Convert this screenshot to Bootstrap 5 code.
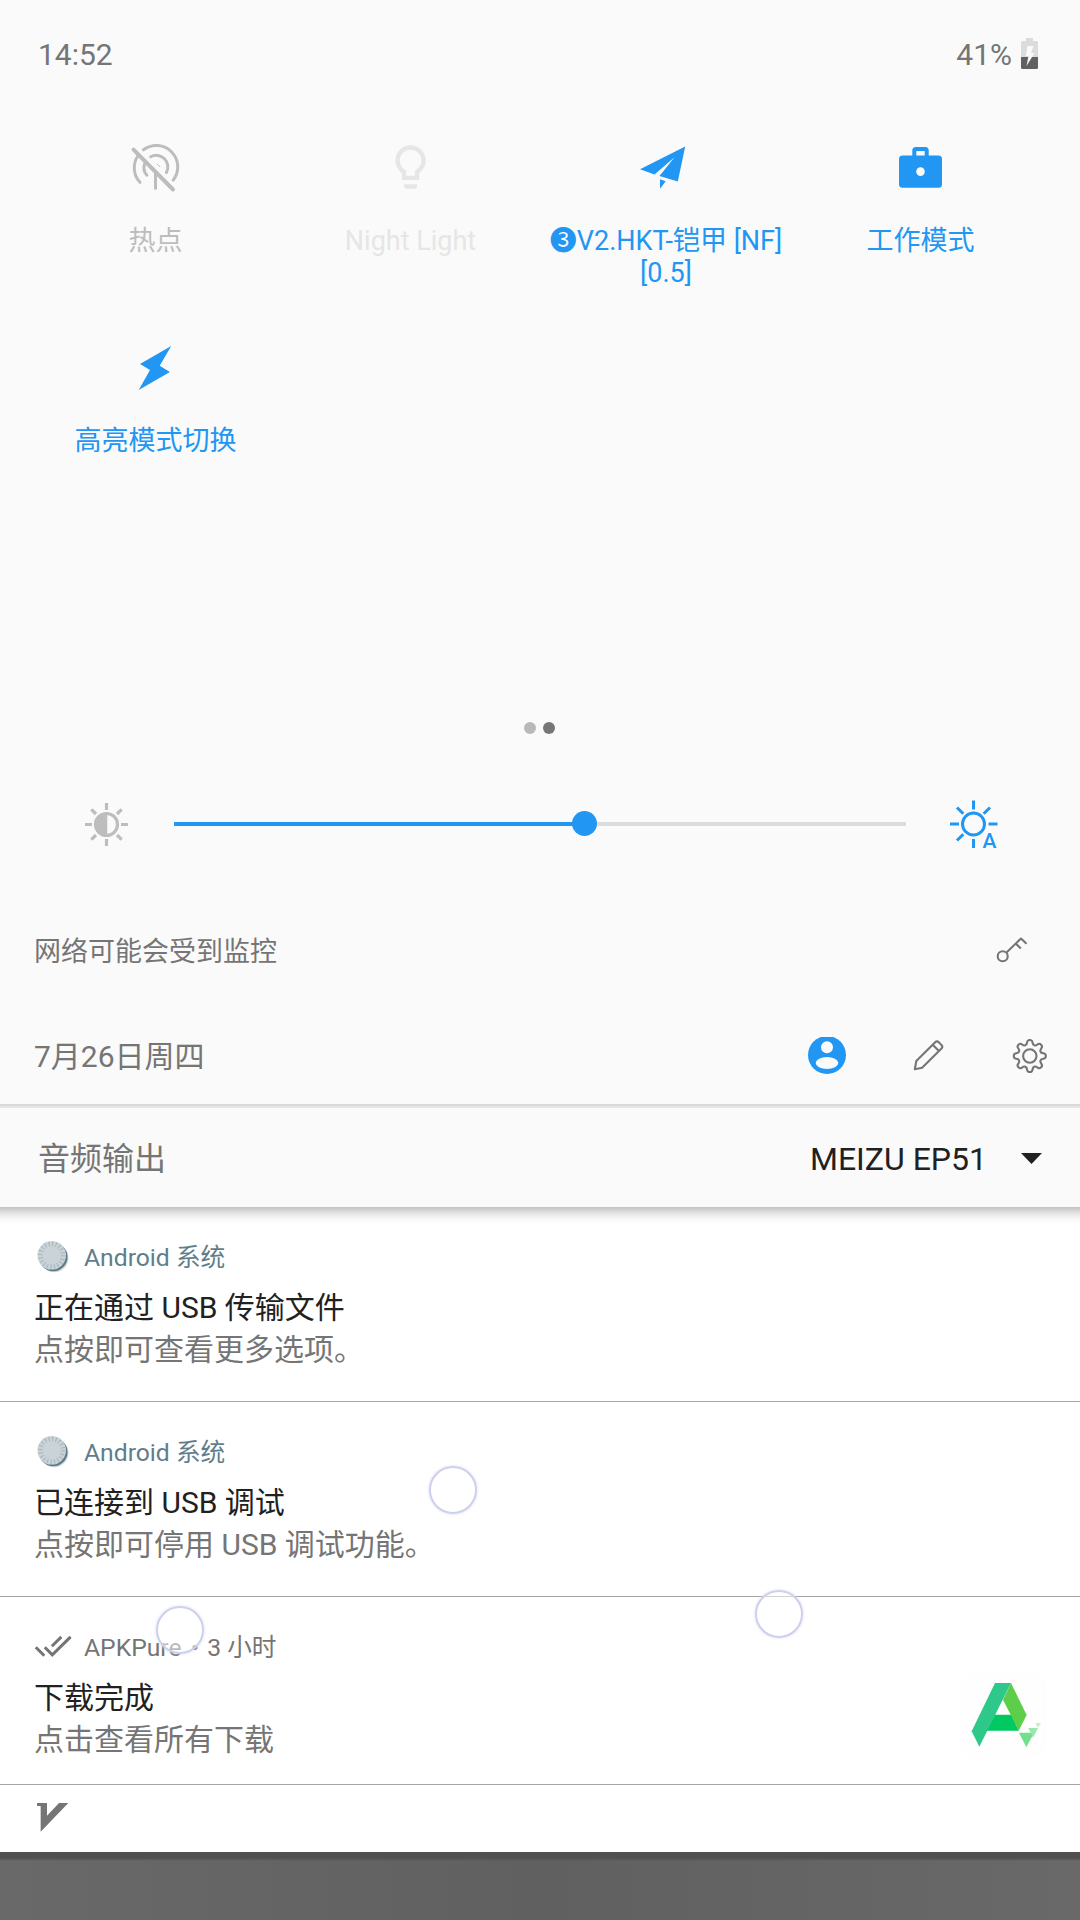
<!DOCTYPE html>
<html lang="zh-CN">
<head>
<meta charset="utf-8">
<meta name="viewport" content="width=device-width, initial-scale=1">
<title>快捷设置</title>
<link rel="stylesheet" href="https://cdn.jsdelivr.net/npm/bootstrap@5.3.0/dist/css/bootstrap.min.css">
<style>
  body { font-family: Roboto, "Noto Sans CJK SC", sans-serif; background: #646464; color: #757575; width: 1080px; height: 1920px; overflow: hidden; }
  svg { display: block; flex: none; }
  .panel { background: #fafafa; }
  .statusbar { height: 110px; padding: 0 42px 0 38px; font-size: 30px; line-height: 40px; }
  .statusbar svg { margin: 0 0 3px 9px; }
  .tiles { height: 590px; padding: 0 32px 0 28px; align-content: flex-start; }
  .tile { height: 200px; padding-top: 31px; font-size: 27px; line-height: 32px; color: #2196f3; }
  .tile svg { margin-bottom: 32px; }
  .tile-off { color: #bdbdbd; }
  .tile-disabled { color: #e6e6e6; }
  .tile-shift { padding-left: 1px; white-space: nowrap; }
  .pager { height: 56px; gap: 7px; padding-right: 1px; }
  .pager span { width: 12px; height: 12px; background: #b9b9b9; }
  .pager .current { background: #767676; }
  .brightness { height: 136px; padding: 0 82px 0 84px; }
  .track { width: 732px; height: 4px; margin: 0 43px 0 45px; background: #dcdcdc; }
  .track-fill { height: 4px; background: #2196f3; }
  .thumb { width: 25px; height: 25px; margin: 0 -12px 1px 0; background: #2196f3; flex: none; }
  .monitor { height: 118px; padding: 0 52px 0 34px; font-size: 27px; }
  .monitor span { padding-top: 2px; }
  .dateline { height: 94px; padding: 0 32px 0 34px; font-size: 30px; }
  .dateline span { padding-bottom: 2px; }
  .rule { height: 4px; background: linear-gradient(#d9d9d9 50%, #e6e6e6 50%); }
  .audio { height: 99px; padding: 2px 38px 0 38px; font-size: 32px; line-height: 40px; }
  .audio-device { color: #212121; }
  .audio svg { margin: 0 0 1px 34px; }
  .shade { background: #fff; }
  .notice { height: 195px; padding: 36px 34px 0 34px; border-bottom: 1px solid #a6a6a6; background: #fff; }
  .notice:first-child { background: linear-gradient(#c2c2c2, #e2e2e2 6px, #f7f7f7 12px, #fff 17px); }
  .notice-head { height: 30px; margin-bottom: 14px; font-size: 24.7px; line-height: 30px; }
  .notice-head svg { margin: 0 10px 2px 0; }
  .dot { margin: 0 2px 0 3px; }
  .from-system { color: #607d8b; }
  .notice-title, .notice-body { font-size: 30px; line-height: 42px; }
  .notice-title { color: #212121; }
  .notice-short { height: 188px; }
  .overflow-row { height: 67px; padding: 15px 36px; }
  .behind { height: 68px; background: linear-gradient(#505050 0, #505050 6px, transparent 9px), linear-gradient(90deg, #696969, #606060 50%, #696969); }
  .touch { position: absolute; width: 48px; height: 48px; border: 2px solid #cdd0ec; border-radius: 50%; background: rgba(255,255,255,.5); box-shadow: 0 0 3px #d5d8f3; }
</style>
</head>
<body class="position-relative">
<main>
  <section class="panel">
    <header class="statusbar d-flex align-items-center justify-content-between">
      <span>14:52</span>
      <div class="d-flex align-items-center">
        <span>41%</span>
        <svg width="17" height="31" viewBox="0 0 17 31"><path fill="#dcdcdc" d="M5 0h7v3h3.500q1.500 0 1.500 1.500V20H0V4.500Q0 3 1.500 3H5z"/><path fill="#616161" d="M0 19h17v10.500q0 1.500-1.500 1.500h-14Q0 31 0 29.500z"/><path fill="#fafafa" d="M6.500 8h6l-2.500 7h3.500L5.500 28l2-10H4.700z"/></svg>
      </div>
    </header>

    <div class="tiles d-flex flex-wrap">
      <div class="tile tile-off w-25 d-flex flex-column align-items-center text-center">
        <svg width="52" height="52" viewBox="130 140.500 52 52" fill="none" stroke="currentColor" stroke-width="3" stroke-linecap="round"><path d="M143.500 149.300a21.400 21.400 0 0 1 29.700 30.300M137.800 155.500a21.400 21.400 0 0 0 2.200 26.300M150.700 156.200a11.600 11.600 0 0 1 15.700 15.800M145 162.300a11.600 11.600 0 0 0 1.900 12.400"/><path stroke-linecap="butt" d="M155.500 172v17"/><path stroke-width="4" d="M133.500 149.200L173 189"/><path stroke-linecap="butt" stroke-width="1" d="M156.800 163.200l3.400 3.400"/></svg>
        <span>热点</span>
      </div>
      <div class="tile tile-disabled w-25 d-flex flex-column align-items-center text-center">
        <svg width="52" height="52" viewBox="0.200 0 24 24" fill="currentColor"><path d="M9 21c0 .55.45 1 1 1h4c.55 0 1-.45 1-1v-1H9v1zm3-19C8.140 2 5 5.140 5 9c0 2.380 1.190 4.470 3 5.740V18h8v-3.260c1.810-1.270 3-3.360 3-5.740 0-3.860-3.140-7-7-7zm2.850 11.100l-.85.6V16h-4v-2.300l-.85-.6C7.800 12.160 7 10.630 7 9c0-2.760 2.240-5 5-5s5 2.240 5 5c0 1.630-.8 3.160-2.150 4.100z"/></svg>
        <span>Night Light</span>
      </div>
      <div class="tile w-25 d-flex flex-column align-items-center text-center">
        <svg width="52" height="52" viewBox="640 141 52 52" fill="currentColor"><path d="M685.200 146.500L640 169.300l14.500 5.200 20-17.300-15 18.800 18.300 5.500zM660 179.300l5.700 2-5.700 7.500z"/></svg>
        <span class="tile-shift">❸V2.HKT-铠甲 [NF]<br>[0.5]</span>
      </div>
      <div class="tile w-25 d-flex flex-column align-items-center text-center">
        <svg width="52" height="52" viewBox="895 141 52 52"><rect x="899" y="155.500" width="43" height="32.300" rx="3.500" fill="currentColor"/><path fill="none" stroke="currentColor" stroke-width="4" d="M914.300 157v-6.500q0-1.500 1.500-1.500h9.400q1.500 0 1.500 1.500v6.500"/><circle cx="920.500" cy="171.600" r="4.300" fill="#fafafa"/></svg>
        <span>工作模式</span>
      </div>
      <div class="tile w-25 d-flex flex-column align-items-center text-center">
        <svg width="52" height="52" viewBox="130 341 52 52" fill="currentColor"><path d="M171.200 346L140 364l10 6-11.300 20 31.200-18-10.200-6.300z"/></svg>
        <span>高亮模式切换</span>
      </div>
    </div>

    <div class="pager d-flex align-items-center justify-content-center">
      <span class="rounded-circle"></span><span class="rounded-circle current"></span>
    </div>

    <div class="brightness d-flex align-items-center">
      <svg width="45" height="45" viewBox="-22.500 -22.500 45 45" stroke="#bdbdbd" stroke-width="3.200" fill="none"><circle r="11"/><path d="M0-11a11 11 0 0 0 0 22z" fill="#bdbdbd" stroke="none"/><path d="M0-11v22" stroke-width="1.500"/><path d="M0-21.500v7M0 14.500v7M-21.500 0h7M14.500 0h7M-15.200-15.200l4.700 4.700M15.200-15.200l-4.700 4.700M-15.200 15.200l4.700-4.700M15.200 15.200l-4.700-4.700"/></svg>
      <div class="track"><div class="track-fill d-flex align-items-center justify-content-end" style="width:56.080%"><span class="thumb rounded-circle"></span></div></div>
      <svg class="overflow-visible" width="49" height="60" viewBox="-24.500 -30 49 60" stroke="#2196f3" stroke-width="3" fill="none"><circle r="11"/><path d="M0-23.500v9M0 15v9M-23.500 0h9M15 0h9M-16.500-16.500l6.300 6.300M16.500-16.500l-6.300 6.300M-16.500 16.500l6.300-6.300"/><text x="9" y="23.500" font-size="21" font-weight="500" fill="#2196f3" stroke="none">A</text></svg>
    </div>

    <div class="monitor d-flex align-items-center justify-content-between">
      <span>网络可能会受到监控</span>
      <svg width="32" height="30" viewBox="996 936 32 30" fill="none" stroke="#757575" stroke-width="2.100"><circle cx="1002.700" cy="956.300" r="5"/><path stroke-linejoin="round" d="M1006.500 952.500l14.500-14 5.500 5.300M1015.500 943.300l5.300 5.300"/></svg>
    </div>

    <div class="dateline d-flex align-items-center">
      <span class="me-auto">7月26日周四</span>
      <svg width="40" height="40" viewBox="-20 -18 40 40"><circle r="19" fill="#2196f3"/><circle cy="-7.700" r="6" fill="#fafafa"/><ellipse cy="8" rx="11.300" ry="6" fill="#fafafa"/></svg>
      <svg style="margin-left:64px" width="36" height="36" viewBox="911 1039 36 36" fill="none" stroke="#757575" stroke-width="2.100" stroke-linejoin="round"><path d="M914.800 1069.200l1.500-8.200 18.900-18.800q1.800-1.800 3.600 0l2.700 2.900q1.700 1.700 0 3.500l-19.400 19.200zM932.700 1044.700l6.500 6.500"/></svg>
      <svg style="margin-left:65px" width="36" height="36" viewBox="-17.800 -17 36 36" fill="none" stroke="#757575" stroke-width="2.100"><defs><path id="cog-tooth" d="M-4.800-10.900C-3-10.800-2.900-12.300-2.700-13.800Q-2.400-16 0-16T2.700-13.800C2.900-12.300 3-10.800 4.800-10.900"/></defs><circle r="6.700"/><use href="#cog-tooth"/><use href="#cog-tooth" transform="rotate(45)"/><use href="#cog-tooth" transform="rotate(90)"/><use href="#cog-tooth" transform="rotate(135)"/><use href="#cog-tooth" transform="rotate(180)"/><use href="#cog-tooth" transform="rotate(225)"/><use href="#cog-tooth" transform="rotate(270)"/><use href="#cog-tooth" transform="rotate(315)"/></svg>
    </div>
    <div class="rule"></div>
    <div class="audio d-flex align-items-center">
      <span class="me-auto">音频输出</span>
      <span class="audio-device">MEIZU EP51</span>
      <svg width="21" height="11" viewBox="0 0 21 11"><path fill="#212121" d="M0 0h21L10.500 11z"/></svg>
    </div>
  </section>

  <section class="shade">
    <article class="notice">
      <div class="notice-head from-system d-flex align-items-center">
        <svg width="40" height="34" viewBox="-0.700 0 40 34"><circle cx="19.500" cy="18" r="14.300" fill="#cfd8dc"/><circle cx="18.500" cy="17" r="14.300" fill="#5d7a86"/><circle cx="17" cy="15.300" r="14.300" fill="#c9d3d8"/><circle cx="17" cy="15.300" r="11.300" fill="none" stroke="#a9b6bc" stroke-width="4.500" stroke-dasharray="1.100 2.450"/></svg>
        <span>Android 系统</span>
      </div>
      <div class="notice-title">正在通过 USB 传输文件</div>
      <div class="notice-body">点按即可查看更多选项。</div>
    </article>
    <article class="notice">
      <div class="notice-head from-system d-flex align-items-center">
        <svg width="40" height="34" viewBox="-0.700 0 40 34"><circle cx="19.500" cy="18" r="14.300" fill="#cfd8dc"/><circle cx="18.500" cy="17" r="14.300" fill="#5d7a86"/><circle cx="17" cy="15.300" r="14.300" fill="#c9d3d8"/><circle cx="17" cy="15.300" r="11.300" fill="none" stroke="#a9b6bc" stroke-width="4.500" stroke-dasharray="1.100 2.450"/></svg>
        <span>Android 系统</span>
      </div>
      <div class="notice-title">已连接到 USB 调试</div>
      <div class="notice-body">点按即可停用 USB 调试功能。</div>
    </article>
    <article class="notice notice-short d-flex justify-content-between">
      <div>
        <div class="notice-head d-flex align-items-center">
          <svg width="40" height="30" viewBox="34 1632 40 30" fill="none" stroke="#757575" stroke-width="3"><path d="M35.800 1647.200l8.500 8.500M44.800 1647.200l7.500 7.700 18.300-18M51.800 1646.200l9.500-9.300"/></svg>
          <span>APKPure <span class="dot">•</span> 3 小时</span>
        </div>
        <div class="notice-title">下载完成</div>
        <div class="notice-body">点击查看所有下载</div>
      </div>
      <svg class="mt-auto" style="margin-bottom:26px" width="85" height="85" viewBox="0 0 255 255"><rect x="1" y="1" width="253" height="253" rx="46" fill="#fefefe" stroke="#f8f8f8"/><path fill="#00c962" d="M100 125h52l21 48H77z"/><path fill="#5dce4a" d="M150 30l47 96-24 47-47-93z"/><path fill="#2ec88b" d="M102 30h48L55 221l-23-46z"/><path fill="#70e08c" d="M174 179h45l-23 44z"/><path fill="#97e8ab" d="M202 165h29l-15 29-7-15z"/><path fill="#c4f2cf" d="M223 150h17l-9 15z"/></svg>
    </article>
    <div class="overflow-row">
      <svg width="33" height="32" viewBox="0 0 99 96"><path fill="#757575" d="M3 9h30v38L69 9h28L14 95V18H3z"/></svg>
    </div>
  </section>
  <div class="behind"></div>
</main>

<span class="touch" style="left:429px;top:1466px"></span>
<span class="touch" style="left:156px;top:1606px"></span>
<span class="touch" style="left:755px;top:1590px"></span>
<script src="https://cdn.jsdelivr.net/npm/bootstrap@5.3.0/dist/js/bootstrap.bundle.min.js"></script>
</body>
</html>
